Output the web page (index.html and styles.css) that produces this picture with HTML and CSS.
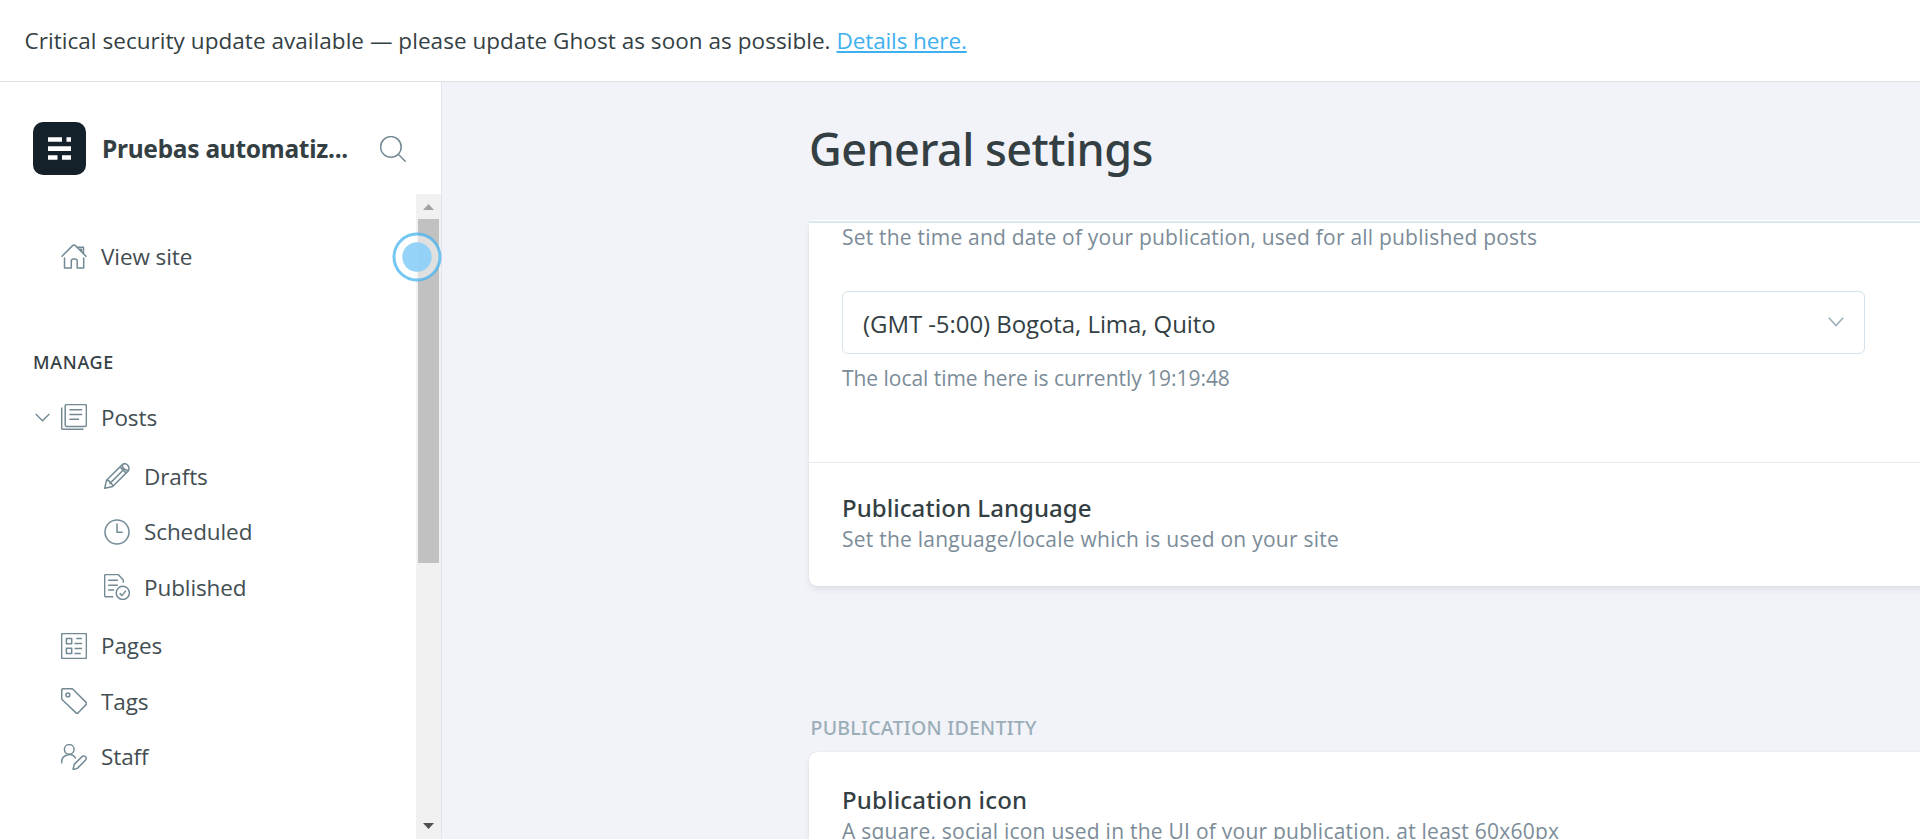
FILE: index.html
```html
<!DOCTYPE html>
<html lang="en">
<head>
<meta charset="utf-8">
<title>General settings</title>
<link rel="stylesheet" href="styles.css">
</head>
<body>
<div class="alert">Critical security update available — please update Ghost as soon as possible. <a class="alert-link" href="#">Details here.</a></div>
<div class="app">
  <nav class="sidebar">
    <header class="brand">
      <svg class="logo" viewBox="0 0 53 53"><rect width="53" height="53" rx="10" fill="#15212a"/><path fill="#fff" d="M15 15.2h14v4.6H15zM33.5 15.2H38v4.6h-4.5zM15 24.3h23v4.6H15zM15 33.2h9.5v4.6H15zM29 33.2h9v4.6h-9z"/></svg>
      <span class="brand-name">Pruebas automatiz...</span>
      <svg class="icon" viewBox="0 0 26 26"><circle cx="10.9" cy="10.9" r="10.3"/><path d="M18.3 18.3l7.5 7.5"/></svg>
    </header>
    <div class="scroller">
      <div class="menu">
        <a class="item"><svg class="icon" viewBox="0 0 26 26"><path d="M.5 12.7L11.6 1.6q1.4-1.2 2.8 0l11.1 11.1M16.8 3.2h5.7v6M19.2 5.6v-.4h1.3v1.7M3.5 13.4v10.7h6.8v-7q0-2.1 2.1-2.1h1.7q2.1 0 2.1 2.1v7h6.5V13.4"/></svg>View site</a>
        <h2 class="group">MANAGE</h2>
        <a class="item posts"><svg class="chevron" viewBox="0 0 15 9"><path d="M.7.9l6.8 6.8L14.3.9"/></svg><svg class="icon" viewBox="0 0 26 26"><rect x="4.2" y=".6" width="21.2" height="21.8" rx="1.3"/><path d="M8.4 5.7h12.8M8.4 10.5h12.8M8.4 15.2H18M.7 3.6v20.3q0 1.4 1.4 1.4h20.4"/></svg>Posts</a>
        <div class="submenu">
          <a class="item"><svg class="icon" viewBox="0 0 26 26"><path d="M.7 25.3l1.8-8L18.3 1.6q2.9-2 5.2.4t1 5.6L8.7 23.5zM2.5 17.3q3.7.1 3.5 3.1 2.7-.1 2.7 3.1M16 3.9l6.2 6.2M18.2 1.8q.6 3.4 2.3 4.4 1.5 1.2 4 1.5M6 20.4L19 7.2"/></svg>Drafts</a>
          <a class="item"><svg class="icon" viewBox="0 0 26 26"><circle cx="13" cy="13" r="12"/><path d="M13 4.6v8.6h5.7"/></svg>Scheduled</a>
          <a class="item"><svg class="icon" viewBox="0 0 26 26"><path d="M9.3 22.8H2q-1.4 0-1.4-1.4V2Q.6.6 2 .6h12.2L19.3 6v2.8M4.2 6.3h9.7M4.2 11.2h9.7M4.2 16.1h6"/><circle cx="18.8" cy="18.9" r="6.6"/><path d="M15.7 19.2l2.2 2.4 4-5"/></svg>Published</a>
        </div>
        <a class="item"><svg class="icon" viewBox="0 0 26 26"><rect x=".6" y=".6" width="24.8" height="24.8" rx="1.2"/><path d="M5.4 5.4h5.3v5.3H5.4zM5.4 15.3h5.3v5.3H5.4zM15.3 5.5h5.6M13.5 10.5h7.6M13.5 15.5h7.6M13.5 20.4h6.2"/></svg>Pages</a>
        <a class="item"><svg class="icon" viewBox="0 0 26 26"><path d="M.7 2.4Q.7.7 2.4.7h7.8q1.2 0 2 .8l12.6 12.6q1.4 1.4 0 2.8l-7.4 7.7q-1.3 1.2-2.6 0L1.5 12q-.8-.8-.8-1.9z"/><circle cx="6.9" cy="6.9" r="1.9"/></svg>Tags</a>
        <a class="item"><svg class="icon" viewBox="0 0 26 26"><circle cx="8.2" cy="5.4" r="4.8"/><path d="M.6 19.6v-1.1a7.6 7.6 0 0 1 14.2-4M12.1 25.4l1.1-5 8.1-8q1.5-1.1 3.1.3t.4 3.1l-8.2 8.3q-2.2 1-4.5 1.3z"/></svg>Staff</a>
      </div>
      <div class="scrollbar">
        <svg class="arrow" viewBox="0 0 25 25"><path fill="#a3a3a3" d="M7 16l5.5-6 5.5 6z"/></svg>
        <div class="thumb"></div>
        <svg class="arrow" viewBox="0 0 25 25"><path fill="#505050" d="M7 9l5.5 6L18 9z"/></svg>
      </div>
    </div>
    <svg class="pointer" viewBox="0 0 52 52"><circle cx="26" cy="26" r="23" fill="#fff" fill-opacity=".5" stroke="#45b3ef" stroke-opacity=".74" stroke-width="3"/><circle cx="26" cy="26" r="14.7" fill="#8ed0f7" fill-opacity=".93"/></svg>
  </nav>
  <main class="main">
    <h1 class="heading">General settings</h1>
    <div class="content">
      <section class="card card-first">
        <div class="timezone">
          <p class="desc">Set the time and date of your publication, used for all published posts</p>
          <div class="select">(GMT -5:00) Bogota, Lima, Quito<svg class="caret" viewBox="0 0 16 10"><path d="M.8.8L8 8.6 15.2.8"/></svg></div>
          <p class="hint">The local time here is currently 19:19:48</p>
        </div>
        <div class="language">
          <h3 class="title">Publication Language</h3>
          <p class="desc spaced">Set the language/locale which is used on your site</p>
        </div>
      </section>
      <h2 class="section">PUBLICATION IDENTITY</h2>
      <section class="card card-identity">
        <h3 class="title icon-title">Publication icon</h3>
        <p class="desc spaced">A square, social icon used in the UI of your publication, at least 60x60px</p>
      </section>
    </div>
  </main>
</div>
</body>
</html>
```
FILE: styles.css
```css
* { box-sizing: border-box; margin: 0; padding: 0; }

body {
  height: 839px;
  display: flex;
  flex-direction: column;
  overflow: hidden;
  background: #fff;
  color: #343f44;
  font-family: "Open Sans", "Noto Sans", sans-serif;
  font-size: 22.5px;
}

svg { display: block; flex: none; }

.alert {
  flex: none;
  height: 82px;
  padding-left: 24.5px;
  border-bottom: 1px solid #dfe1e3;
  line-height: 81px;
  letter-spacing: .045px;
  white-space: pre;
}
.alert-link { color: #3eb0ef; letter-spacing: -.1px; text-underline-offset: 2px; text-decoration-thickness: 2px; text-decoration-skip-ink: none; }

.app { flex: 1; min-height: 0; display: flex; }

.sidebar {
  position: relative;
  flex: none;
  width: 442px;
  display: flex;
  flex-direction: column;
  border-right: 1px solid #e3e4ee;
}
.brand { flex: none; height: 112px; display: flex; align-items: center; padding: 22px 35px 1px 33px; }
.logo { width: 53px; height: 53px; margin-top: -1px; }
.brand-name {
  flex: 1;
  margin-left: 16px;
  font: 700 24.5px/34px "Noto Sans", sans-serif;
  letter-spacing: -.27px;
  white-space: nowrap;
}
.icon { width: 26px; height: 26px; fill: none; stroke: #738a94; stroke-width: 1.5; stroke-linejoin: round; }

.scroller { flex: 1; min-height: 0; display: flex; }
.menu { flex: 1; padding: 35px 0 0 34px; color: #434e53; }
.item { height: 55.5px; display: flex; align-items: center; gap: 14px; padding-left: 27px; letter-spacing: -.1px; }
.group { margin: 62.5px 0 12.5px -1px; font: 500 18px/30px "Noto Sans", sans-serif; letter-spacing: .7px; color: #343f44; }
.posts { padding-left: 1px; gap: 0; }
.posts .icon { margin: 0 14px 0 11px; }
.chevron { width: 15px; height: 9px; fill: none; stroke: #738a94; stroke-width: 1.4; }
.submenu { margin: 3.5px 0 3px 43px; }

.scrollbar { width: 25px; display: flex; flex-direction: column; background: #f1f1f1; }
.arrow { width: 25px; height: 25px; }
.thumb { height: 344px; margin: 0 2px auto; background: #c1c1c1; }

.pointer { position: absolute; left: 390.5px; top: 148.5px; width: 52px; height: 52px; }

.main { flex: 1; min-width: 0; display: flex; flex-direction: column; padding-left: 367px; background: #f2f3f8; overflow: hidden; }
.heading { height: 138px; padding-top: 36px; font: 500 45px/61px "Noto Sans", sans-serif; letter-spacing: -.55px; }
.content { flex: 1; min-height: 0; margin-left: -30px; padding-left: 30px; overflow: hidden; }

.card {
  width: 1170px;
  background: #fff;
  box-shadow: 0 0 1px rgba(0, 0, 0, .18), 0 4px 9px -2px rgba(30, 45, 60, .12);
}
.card-first { padding-top: 1px; border-radius: 0 0 8px 8px; }
.timezone { border-top: 2px solid #dbe8f0; padding: 0 0 69px 33px; }
.desc { font-size: 21px; line-height: 28px; letter-spacing: .21px; color: #7b8c98; }
.desc.spaced { line-height: 33px; letter-spacing: .24px; }
.select {
  width: 1023px;
  height: 63px;
  margin: 40px 0 9px;
  padding: 2px 20px 0;
  display: flex;
  align-items: center;
  justify-content: space-between;
  border: 1px solid #d6e3eb;
  border-radius: 6px;
  font-size: 24px;
  letter-spacing: -.07px;
}
.caret { width: 16px; height: 10px; margin-top: -4px; fill: none; stroke: #9baeb8; stroke-width: 1.6; }
.hint { padding-top: 1px; font-size: 21px; line-height: 29px; letter-spacing: -.04px; color: #7b8c98; }
.language { border-top: 1px solid #e4ecf2; padding: 29px 33px 30px; }
.title { font: 500 24px/31px "Noto Sans", sans-serif; letter-spacing: .05px; }
.icon-title { letter-spacing: .16px; }
.section { margin: 127px 0 9px 1.5px; font: 500 19.5px/30px "Noto Sans", sans-serif; letter-spacing: .27px; color: #9baeb8; }
.card-identity { height: 300px; padding: 32px 33px; border-radius: 8px; }
```
